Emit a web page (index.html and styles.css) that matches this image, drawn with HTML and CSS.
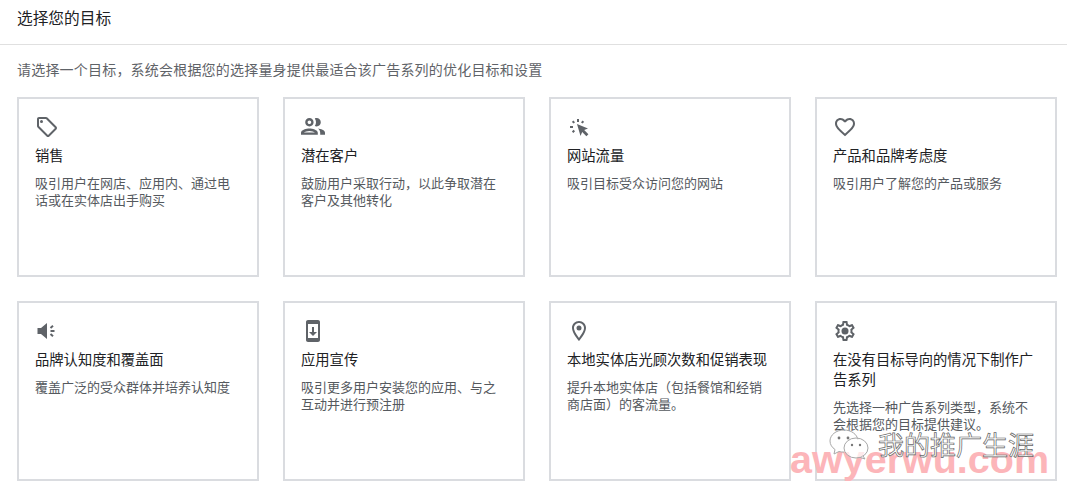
FILE: index.html
```html
<!DOCTYPE html>
<html lang="zh-CN">
<head>
<meta charset="utf-8">
<title>选择您的目标</title>
<link rel="stylesheet" href="styles.css">
</head>
<body>
<header class="top"><h1 class="page-title">选择您的目标</h1></header>
<main class="main">
  <p class="intro">请选择一个目标，系统会根据您的选择量身提供最适合该广告系列的优化目标和设置</p>
  <div class="grid">
    <section class="card">
      <svg class="icon" viewBox="0 0 24 24"><path d="M21.41 11.58l-9-9C12.05 2.22 11.55 2 11 2H4c-1.1 0-2 .9-2 2v7c0 .55.22 1.05.59 1.42l9 9c.36.36.86.58 1.41.58.55 0 1.05-.22 1.41-.59l7-7c.37-.36.59-.86.59-1.41 0-.55-.23-1.06-.59-1.42zM13 20.01L4 11V4h7v-.01l9 8.99-7 7.02z"/><circle cx="6.5" cy="6.5" r="1.5"/></svg>
      <h2 class="card-title">销售</h2>
      <p class="card-text">吸引用户在网店、应用内、通过电话或在实体店出手购买</p>
    </section>
    <section class="card">
      <svg class="icon" viewBox="2 2.500 20 20"><path d="M9 13.75c-2.34 0-7 1.17-7 3.5V19h14v-1.75c0-2.33-4.66-3.5-7-3.5zM4.34 17c.84-.58 2.87-1.25 4.66-1.25s3.82.67 4.66 1.25H4.34zM9 12c1.93 0 3.5-1.57 3.5-3.5S10.93 5 9 5 5.5 6.57 5.5 8.5 7.07 12 9 12zm0-5c.83 0 1.5.67 1.5 1.5S9.83 10 9 10s-1.5-.67-1.5-1.5S8.17 7 9 7zm7.04 6.81c1.16.84 1.96 1.96 1.96 3.44V19h4v-1.75c0-2.02-3.5-3.17-5.96-3.44zM15 12c1.93 0 3.5-1.57 3.5-3.5S16.93 5 15 5c-.54 0-1.04.13-1.5.35.63.89 1 1.98 1 3.15s-.37 2.26-1 3.15c.46.22.96.35 1.5.35z"/></svg>
      <h2 class="card-title">潜在客户</h2>
      <p class="card-text">鼓励用户采取行动，以此争取潜在客户及其他转化</p>
    </section>
    <section class="card">
      <svg class="icon" viewBox="0 0 24 24"><path d="M10 9l11 4.400-3.800 1.700 4.200 4.200-2 2-4.200-4.200-1.700 3.800z"/><path class="ticks" d="M11 4v3M5.6 6.200l1.700 1.700M16.400 6.200l-1.700 1.700M3 12h3M5.600 17.200l1.700-1.700"/></svg>
      <h2 class="card-title">网站流量</h2>
      <p class="card-text">吸引目标受众访问您的网站</p>
    </section>
    <section class="card">
      <svg class="icon" viewBox="0 0 24 24"><path d="M16.5 3c-1.74 0-3.41.81-4.5 2.09C10.91 3.81 9.24 3 7.5 3 4.42 3 2 5.42 2 8.5c0 3.78 3.4 6.86 8.55 11.54L12 21.35l1.45-1.32C18.6 15.36 22 12.28 22 8.5 22 5.42 19.58 3 16.5 3zm-4.4 15.55l-.1.1-.1-.1C7.14 14.24 4 11.39 4 8.5 4 6.5 5.5 5 7.5 5c1.54 0 3.04.99 3.57 2.36h1.87C13.46 5.99 14.96 5 16.5 5c2 0 3.5 1.5 3.5 3.5 0 2.89-3.14 5.74-7.9 10.05z"/></svg>
      <h2 class="card-title">产品和品牌考虑度</h2>
      <p class="card-text">吸引用户了解您的产品或服务</p>
    </section>
    <section class="card">
      <svg class="icon" viewBox="0 0 24 24"><path d="M2.500 9h3.500L12 4v16l-6-5H2.500z"/><path class="ticks" d="M15.500 9l2.500-2.200M15.500 12H19.500M15.500 15l2.500 2.200"/></svg>
      <h2 class="card-title">品牌认知度和覆盖面</h2>
      <p class="card-text">覆盖广泛的受众群体并培养认知度</p>
    </section>
    <section class="card">
      <svg class="icon" viewBox="0 0 24 24"><path d="M17 1.010L7 1c-1.100 0-2 .9-2 2v18c0 1.100.9 2 2 2h10c1.100 0 2-.9 2-2V3c0-1.100-.9-1.990-2-1.990zM17 19H7V5h10v14zm-1-6h-3V8h-2v5H8l4 4 4-4z"/></svg>
      <h2 class="card-title">应用宣传</h2>
      <p class="card-text">吸引更多用户安装您的应用、与之互动并进行预注册</p>
    </section>
    <section class="card">
      <svg class="icon" viewBox="0 0 24 24"><path d="M12 2C8.130 2 5 5.130 5 9c0 5.250 7 13 7 13s7-7.750 7-13c0-3.870-3.130-7-7-7zM7 9c0-2.760 2.240-5 5-5s5 2.240 5 5c0 2.880-2.880 7.190-5 9.880C9.920 16.210 7 11.850 7 9z"/><circle cx="12" cy="9" r="2.500"/></svg>
      <h2 class="card-title">本地实体店光顾次数和促销表现</h2>
      <p class="card-text">提升本地实体店（包括餐馆和经销商店面）的客流量。</p>
    </section>
    <section class="card">
      <svg class="icon" viewBox="0 0 24 24"><path d="M19.430 12.980c.04-.32.07-.64.07-.98 0-.34-.03-.66-.07-.98l2.110-1.650c.19-.15.24-.42.12-.64l-2-3.460c-.09-.16-.26-.25-.44-.25-.06 0-.12.01-.17.03l-2.490 1c-.52-.4-1.080-.73-1.690-.98l-.38-2.650C14.460 2.180 14.250 2 14 2h-4c-.25 0-.46.18-.49.42l-.38 2.650c-.61.25-1.170.59-1.690.98l-2.490-1c-.06-.02-.12-.03-.18-.03-.17 0-.34.09-.43.25l-2 3.460c-.13.22-.07.49.12.64l2.110 1.650c-.04.32-.07.65-.07.98 0 .33.03.66.07.98l-2.110 1.650c-.19.15-.24.42-.12.64l2 3.460c.09.16.26.25.44.25.06 0 .12-.01.17-.03l2.490-1c.52.4 1.080.73 1.690.98l.38 2.650c.03.24.24.42.49.42h4c.25 0 .46-.18.49-.42l.38-2.650c.61-.25 1.170-.59 1.690-.98l2.490 1c.06.02.12.03.18.03.17 0 .34-.09.43-.25l2-3.460c.12-.22.07-.49-.12-.64l-2.110-1.650zm-1.980-1.710c.04.31.05.52.05.73 0 .21-.02.43-.05.73l-.14 1.130.89.7 1.080.84-.7 1.210-1.270-.51-1.040-.42-.9.68c-.43.32-.84.56-1.250.73l-1.060.43-.16 1.130-.2 1.350h-1.400l-.19-1.350-.16-1.130-1.060-.43c-.43-.18-.83-.41-1.230-.71l-.91-.7-1.060.43-1.270.51-.7-1.210 1.080-.84.89-.7-.14-1.130c-.03-.31-.05-.54-.05-.74s.02-.43.05-.73l.14-1.130-.89-.7-1.080-.84.7-1.210 1.270.51 1.040.42.9-.68c.43-.32.84-.56 1.250-.73l1.060-.43.16-1.130.2-1.350h1.390l.19 1.350.16 1.130 1.060.43c.43.18.83.41 1.230.71l.91.7 1.060-.43 1.270-.51.7 1.210-1.070.85-.89.7.14 1.130z"/><circle cx="12" cy="12" r="3.500"/></svg>
      <h2 class="card-title">在没有目标导向的情况下制作广告系列</h2>
      <p class="card-text">先选择一种广告系列类型，系统不会根据您的目标提供建议。</p>
    </section>
  </div>
</main>
<div class="site-mark">awyerwu.com</div>
<div class="watermark">
  <svg class="wm-icon" viewBox="0 0 42 32"><path d="M16 2C8 2 2 7 2 13c0 3.500 2 6.500 5 8.500L6 26l5-2.500c1.500.4 3 .6 5 .6" /><path d="M16 2c7 0 13 4 14 10" /><ellipse cx="28" cy="20" rx="12" ry="10" /><path d="M35 28l2 3-5-1.600" /><circle class="dot" cx="11" cy="10" r="1.400"/><circle class="dot" cx="20" cy="10" r="1.400"/><circle class="dot" cx="24" cy="17" r="1.200"/><circle class="dot" cx="32" cy="17" r="1.200"/></svg>
  <span class="wm-name">我的推广生涯</span>
</div>
</body>
</html>
```

FILE: styles.css
```css
html, body {
  margin: 0;
  padding: 0;
  height: 493px;
  overflow: hidden;
  background: #fff;
  font-family: "Noto Sans CJK SC", "Liberation Sans", sans-serif;
}
.top {
  height: 44px;
  border-bottom: 1px solid #e0e0e0;
  padding-left: 17px;
  display: flex;
  align-items: center;
  box-sizing: content-box;
}
.page-title {
  margin: 0 0 8px;
  font-size: 15.700px;
  font-weight: 400;
  color: #202124;
  line-height: 24px;
}
.main {
  padding: 0 10px 0 17px;
}
.intro {
  margin: 0;
  padding-top: 14px;
  height: 38px;
  line-height: 20px;
  font-size: 14px;
  letter-spacing: .2px;
  color: #5f6368;
}
.grid {
  display: grid;
  grid-template-columns: repeat(4, 242px);
  grid-auto-rows: 180px;
  gap: 24px;
}
.card {
  box-sizing: border-box;
  border: 2px solid #dadce0;
  padding: 16px 16px 0;
  overflow: hidden;
}
.icon {
  display: block;
  width: 24px;
  height: 24px;
  fill: #5f6368;
}
.ticks {
  fill: none;
  stroke: #5f6368;
  stroke-width: 2;
}
.card-title {
  margin: 6px 0 0;
  font-size: 14.300px;
  font-weight: 400;
  line-height: 20px;
  color: #202124;
}
.card-text {
  margin: 9px 0 0;
  font-size: 13px;
  line-height: 17px;
  color: #55595e;
}
.watermark {
  position: absolute;
  left: 828px;
  top: 426px;
  display: flex;
  align-items: center;
  gap: 8px;
}
.wm-icon {
  width: 42px;
  height: 32px;
  fill: rgba(255, 255, 255, .7);
  stroke: #a8a8a8;
  stroke-width: 1;
}
.wm-icon .dot {
  fill: #777;
  stroke: none;
}
.wm-name {
  font-size: 26px;
  line-height: 36px;
  color: #fff;
  -webkit-text-stroke: .7px #666;
}
.site-mark {
  position: absolute;
  left: 790px;
  top: 429px;
  font-family: "Liberation Sans", sans-serif;
  font-weight: 700;
  font-size: 39.500px;
  line-height: 60px;
  color: #fcb5b9;
}
```
